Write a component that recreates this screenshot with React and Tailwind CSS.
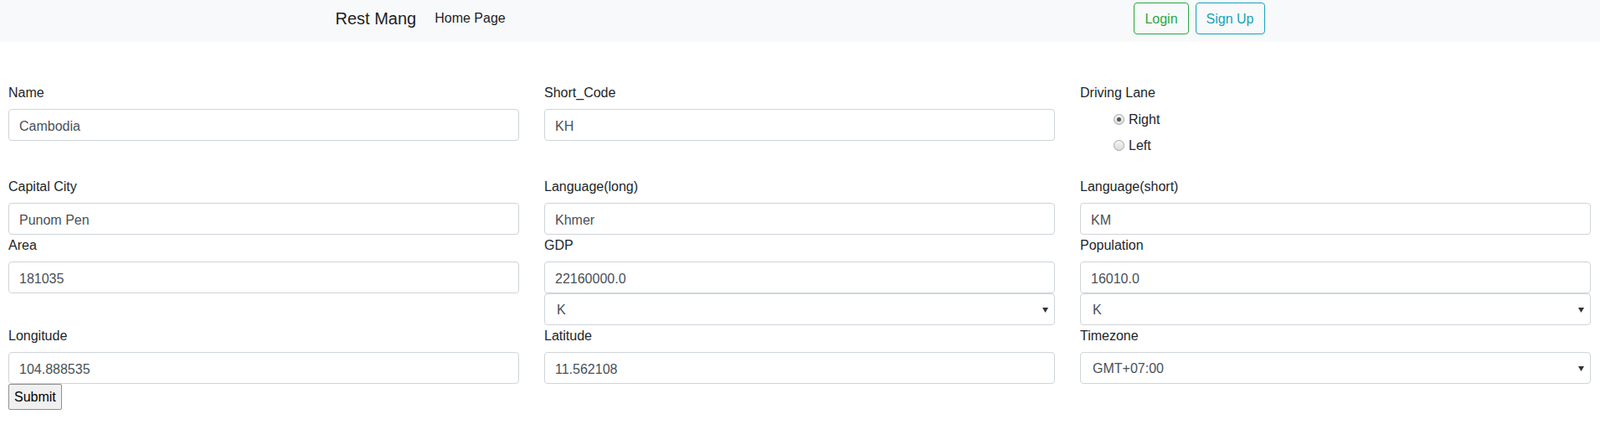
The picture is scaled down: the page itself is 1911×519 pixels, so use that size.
import React from "react";

const font = { fontFamily: '"Liberation Sans", Arial, sans-serif' };

function Label({ children }) {
  return (
    <label className="block text-[16px] leading-[26px] mb-[6px] text-[#212529]">
      {children}
    </label>
  );
}

function TextInput({ value }) {
  return (
    <input
      readOnly
      value={value}
      className="block w-full h-[38px] px-[12px] pt-[3px] text-[16px] leading-[24px] text-[#495057] bg-white border border-[#ced4da] rounded-[4px] outline-none"
      style={font}
    />
  );
}

function Select({ value }) {
  return (
    <div className="relative w-full h-[38px] bg-white border border-[#ced4da] rounded-[4px] flex items-center pl-[14px] pt-[2px] text-[16px] leading-[24px] text-[#495057]">
      <span>{value}</span>
      <svg
        className="absolute right-[7px] top-[15px]"
        width="7"
        height="7"
        viewBox="0 0 7 7"
      >
        <path d="M0 1 L7 1 L3.5 7 Z" fill="#333" />
      </svg>
    </div>
  );
}

function Radio({ checked, label }) {
  return (
    <div className="flex items-center h-[24px] ml-[40px]">
      <span className="w-[13px] h-[13px] mt-[1px] rounded-full border border-[#a3a3a3] bg-gradient-to-b from-[#f4f4f4] to-[#dcdcdc] flex items-center justify-center">
        {checked && <span className="w-[5px] h-[5px] rounded-full bg-[#555]" />}
      </span>
      <span className="ml-[5px] pt-[2px] text-[16px] text-[#212529]">{label}</span>
    </div>
  );
}

export default function App() {
  return (
    <div className="w-[1911px] min-h-[519px] bg-white" style={font}>
      <div className="bg-[#f8f9fa] h-[50px]">
        <div className="mx-auto w-[1140px] px-[15px] h-[44px] flex items-center">
          <span className="text-[20px] leading-[30px] text-black/90 mr-[14px]">Rest Mang</span>
          <span className="px-[8px] text-[16px] leading-[24px] text-black/90">Home Page</span>
          <div className="ml-auto flex gap-[8px]">
            <button className="h-[38px] px-[12px] pt-[2px] text-[16px] text-[#28a745] border border-[#28a745] rounded-[4px] bg-transparent">
              Login
            </button>
            <button className="h-[38px] px-[12px] pt-[2px] text-[16px] text-[#17a2b8] border border-[#17a2b8] rounded-[4px] bg-transparent">
              Sign Up
            </button>
          </div>
        </div>
      </div>

      <div className="mt-[48px] px-[10px] pr-[11px]">
        <div className="grid grid-cols-3 gap-x-[30px] mb-[25px]">
          <div>
            <Label>Name</Label>
            <TextInput value="Cambodia" />
          </div>
          <div>
            <Label>Short_Code</Label>
            <TextInput value="KH" />
          </div>
          <div>
            <Label>Driving Lane</Label>
            <div className="mt-[1px] flex flex-col gap-[7px]">
              <Radio checked label="Right" />
              <Radio label="Left" />
            </div>
          </div>
        </div>

        <div className="grid grid-cols-3 gap-x-[30px]">
          <div>
            <Label>Capital City</Label>
            <TextInput value="Punom Pen" />
          </div>
          <div>
            <Label>Language(long)</Label>
            <TextInput value="Khmer" />
          </div>
          <div>
            <Label>Language(short)</Label>
            <TextInput value="KM" />
          </div>
        </div>

        <div className="grid grid-cols-3 gap-x-[30px]">
          <div>
            <Label>Area</Label>
            <TextInput value="181035" />
          </div>
          <div>
            <Label>GDP</Label>
            <TextInput value="22160000.0" />
            <Select value="K" />
          </div>
          <div>
            <Label>Population</Label>
            <TextInput value="16010.0" />
            <Select value="K" />
          </div>
        </div>

        <div className="grid grid-cols-3 gap-x-[30px]">
          <div>
            <Label>Longitude</Label>
            <TextInput value="104.888535" />
            <button className="h-[31px] px-[6px] pt-[1px] text-[16px] leading-[24px] text-black bg-[#f0f0f0] border border-[#8f8f8f] rounded-[2px]">
              Submit
            </button>
          </div>
          <div>
            <Label>Latitude</Label>
            <TextInput value="11.562108" />
          </div>
          <div>
            <Label>Timezone</Label>
            <Select value="GMT+07:00" />
          </div>
        </div>
      </div>
    </div>
  );
}
